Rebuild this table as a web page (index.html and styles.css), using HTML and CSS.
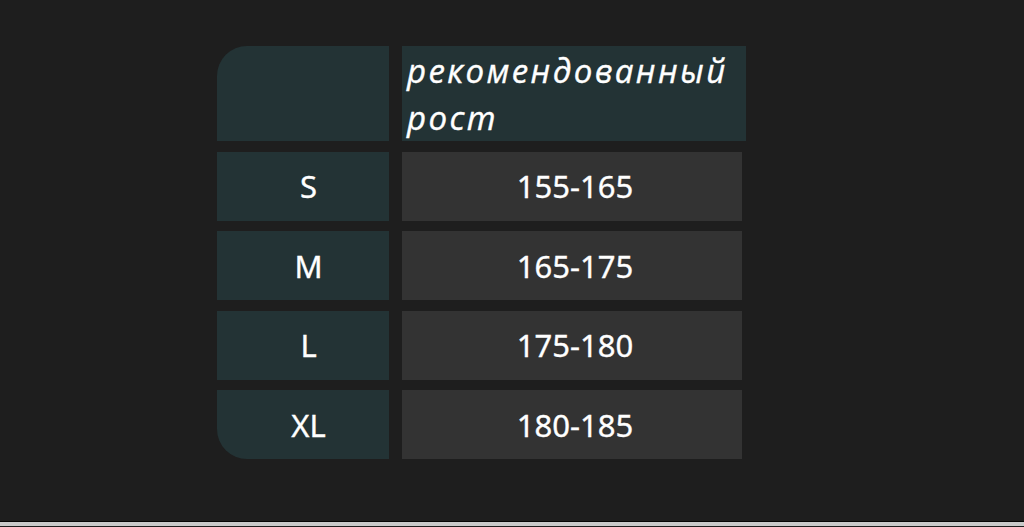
FILE: index.html
```html
<!DOCTYPE html>
<html lang="ru">
<head>
<meta charset="utf-8">
<title>Размеры</title>
<link rel="stylesheet" href="styles.css">
</head>
<body>
<div class="page">
  <div class="table">
    <div class="cell size head-left"></div>
    <div class="cell head-right">рекомендованный рост</div>

    <div class="cell size">S</div>
    <div class="cell value">155-165</div>

    <div class="cell size">M</div>
    <div class="cell value">165-175</div>

    <div class="cell size">L</div>
    <div class="cell value">175-180</div>

    <div class="cell size last-left">XL</div>
    <div class="cell value">180-185</div>
  </div>
</div>
</body>
</html>
```
FILE: styles.css
```css
html, body {
  margin: 0;
  padding: 0;
  background: #1e1e1e;
}
body {
  width: 1024px;
  height: 527px;
  overflow: hidden;
}
.page {
  height: 522px;
  box-sizing: border-box;
  padding: 46px 0 0 217px;
  border-bottom: 1px solid #050505;
}
body::after {
  content: "";
  display: block;
  height: 4px;
  background: #c9c9c9;
}
.table {
  display: grid;
  grid-template-columns: 172px 344px;
  grid-template-rows: 95px 69px 69px 69px 69px;
  column-gap: 13px;
  row-gap: 10.5px;
}
.cell {
  display: flex;
  align-items: center;
  justify-content: center;
  color: #ffffff;
  font-family: "Noto Sans", "Open Sans", sans-serif;
  font-size: 31px;
  font-weight: 400;
  box-sizing: border-box;
  -webkit-text-stroke: 0.35px #ffffff;
}
.size {
  background: #233335;
  padding-left: 11px;
}
.value {
  background: #333333;
  margin-right: 4px;
  padding-left: 6px;
}
.head-left {
  border-top-left-radius: 30px;
}
.last-left {
  border-bottom-left-radius: 30px;
}
.head-right {
  background: #233335;
  justify-content: flex-start;
  align-items: flex-start;
  font-family: "Open Sans", sans-serif;
  font-style: italic;
  font-weight: 400;
  font-size: 33px;
  letter-spacing: 2.4px;
  line-height: 47px;
  padding: 1px 0 0 5px;
  -webkit-text-stroke: 0.4px #ffffff;
}
```
